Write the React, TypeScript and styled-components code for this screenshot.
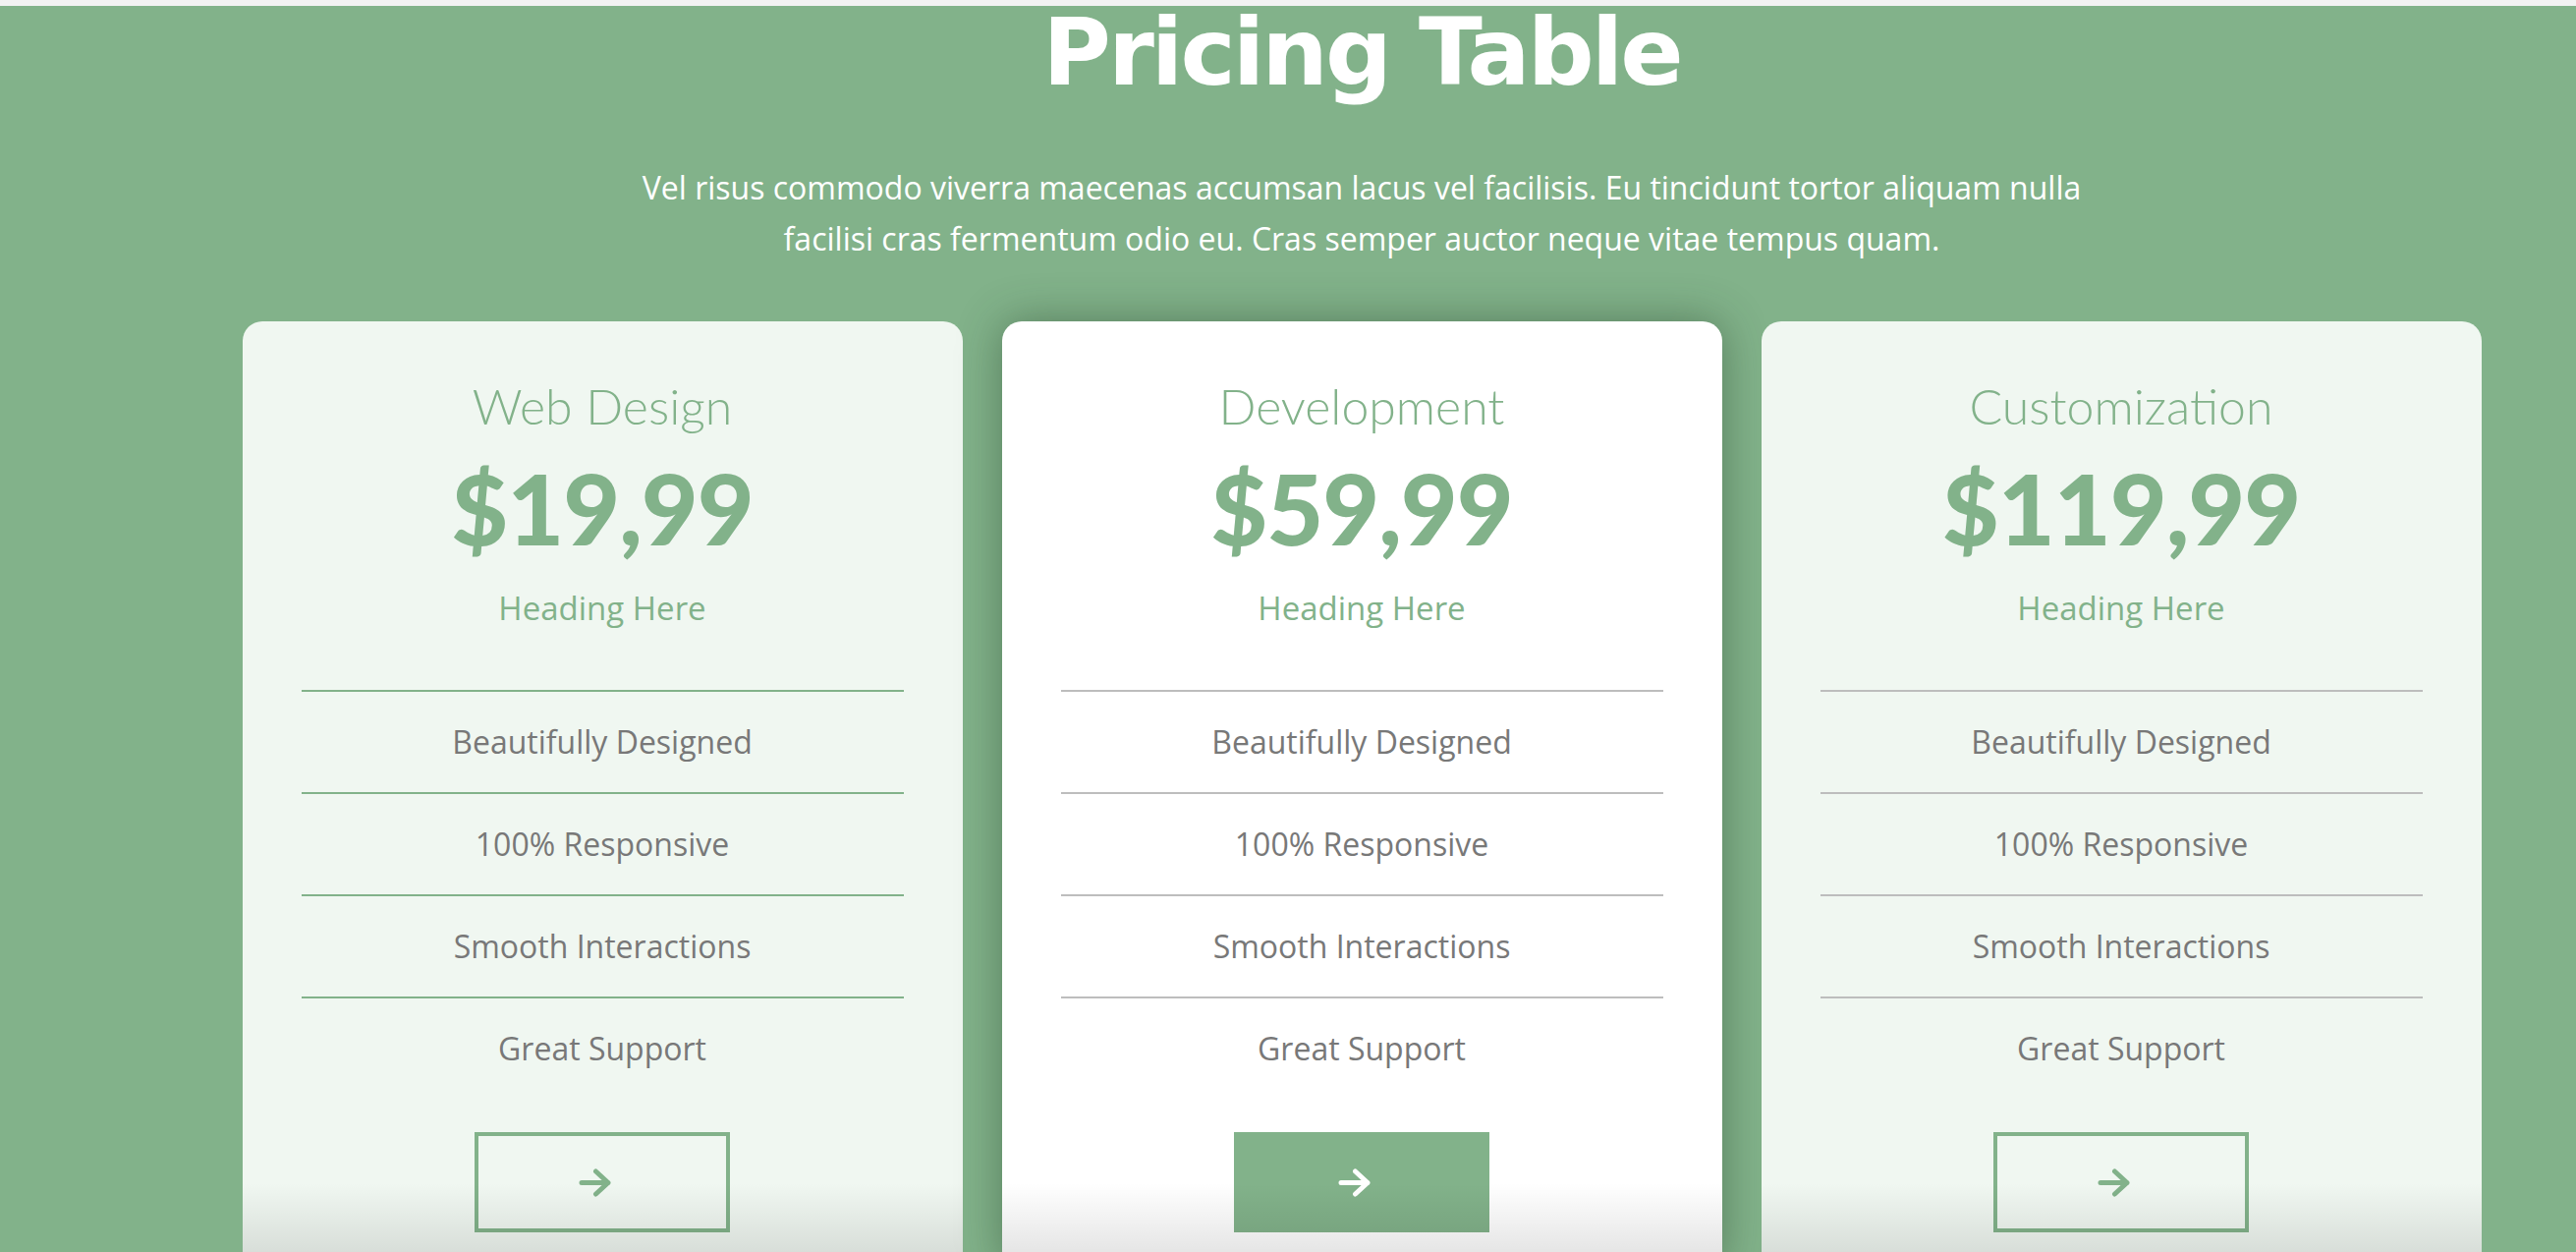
import React from "react";
import styled, { createGlobalStyle } from "styled-components";

const GREEN = "#82b28a";

const Global = createGlobalStyle`
  html, body {
    margin: 0;
    padding: 0;
    background: #f2f2f2;
  }
  body {
    font-family: "Open Sans", "Liberation Sans", sans-serif;
  }
  * { box-sizing: border-box; }
`;

const Section = styled.section`
  margin-top: 6px;
  background: ${GREEN};
  min-height: 1400px;
  padding: 0 0 80px 150px;
  display: flex;
  flex-direction: column;
  align-items: center;
`;

const Title = styled.h1`
  margin: 0;
  font-family: "DejaVu Sans", "Liberation Sans", sans-serif;
  font-weight: 700;
  font-size: 95px;
  line-height: 95px;
  letter-spacing: -3px;
  color: #ffffff;
  text-align: center;
`;

const Subtitle = styled.p`
  margin: 64px 0 0;
  max-width: 1500px;
  font-family: "Open Sans", sans-serif;
  font-size: 32px;
  line-height: 52px;
  color: #ffffff;
  text-align: center;
`;

const CardRow = styled.div`
  margin-top: 58px;
  display: flex;
  justify-content: center;
  gap: 40px;
`;

const Card = styled.div<{ $featured?: boolean }>`
  position: relative;
  width: 733px;
  border-radius: 20px;
  overflow: hidden;
  background: ${(p) => (p.$featured ? "#ffffff" : "#f0f7f1")};
  box-shadow: ${(p) => (p.$featured ? "0 0 45px rgba(30, 60, 35, 0.45)" : "none")};
  padding: 61px 60px 40px;
  display: flex;
  flex-direction: column;
  align-items: center;

  &::after {
    content: "";
    position: absolute;
    left: 0;
    right: 0;
    bottom: 0;
    height: 90px;
    background: linear-gradient(rgba(0, 0, 0, 0), rgba(0, 0, 0, 0.13));
    pointer-events: none;
  }
`;

const PlanName = styled.h2`
  margin: 0;
  font-family: "Lato", sans-serif;
  font-weight: 300;
  font-size: 50px;
  line-height: 50px;
  color: ${GREEN};
`;

const Price = styled.div`
  margin-top: 28px;
  font-family: "Lato", sans-serif;
  font-weight: 900;
  font-size: 100px;
  line-height: 100px;
  letter-spacing: -1px;
  color: ${GREEN};
`;

const SubHeading = styled.div`
  margin-top: 36px;
  font-family: "Open Sans", sans-serif;
  font-size: 33px;
  line-height: 33px;
  color: ${GREEN};
`;

const Features = styled.ul`
  margin: 67px 0 0;
  padding: 0;
  list-style: none;
  width: 100%;
`;

const Feature = styled.li<{ $line: string }>`
  border-top: 2px solid ${(p) => p.$line};
  height: 104px;
  line-height: 102px;
  text-align: center;
  font-family: "Open Sans", sans-serif;
  font-size: 32px;
  color: #787878;
`;

const Button = styled.button<{ $filled?: boolean }>`
  margin-top: 34px;
  width: 260px;
  height: 102px;
  border: ${(p) => (p.$filled ? "none" : `4px solid ${GREEN}`)};
  background: ${(p) => (p.$filled ? GREEN : "transparent")};
  color: ${(p) => (p.$filled ? "#ffffff" : GREEN)};
  display: flex;
  align-items: center;
  justify-content: center;
  cursor: pointer;
  padding: 0 14px 0 0;
`;

const Arrow = () => (
  <svg width="34" height="29" viewBox="0 0 34 29" fill="none">
    <path
      d="M3 14.5 H30 M17.5 3 L30 14.5 L17.5 26"
      stroke="currentColor"
      strokeWidth="5"
      strokeLinecap="round"
      strokeLinejoin="round"
    />
  </svg>
);

const plans = [
  { name: "Web Design", price: "$19,99", line: GREEN, featured: false },
  { name: "Development", price: "$59,99", line: "#bdbdbd", featured: true },
  { name: "Customization", price: "$119,99", line: "#bdbdbd", featured: false },
];

const features = [
  "Beautifully Designed",
  "100% Responsive",
  "Smooth Interactions",
  "Great Support",
];

export default function App() {
  return (
    <>
      <Global />
      <Section>
        <Title>Pricing Table</Title>
        <Subtitle>
          Vel risus commodo viverra maecenas accumsan lacus vel facilisis. Eu
          tincidunt tortor aliquam nulla facilisi cras fermentum odio eu. Cras
          semper auctor neque vitae tempus quam.
        </Subtitle>
        <CardRow>
          {plans.map((p) => (
            <Card key={p.name} $featured={p.featured}>
              <PlanName>{p.name}</PlanName>
              <Price>{p.price}</Price>
              <SubHeading>Heading Here</SubHeading>
              <Features>
                {features.map((f) => (
                  <Feature key={f} $line={p.line}>
                    {f}
                  </Feature>
                ))}
              </Features>
              <Button $filled={p.featured} aria-label="Select plan">
                <Arrow />
              </Button>
            </Card>
          ))}
        </CardRow>
      </Section>
    </>
  );
}
